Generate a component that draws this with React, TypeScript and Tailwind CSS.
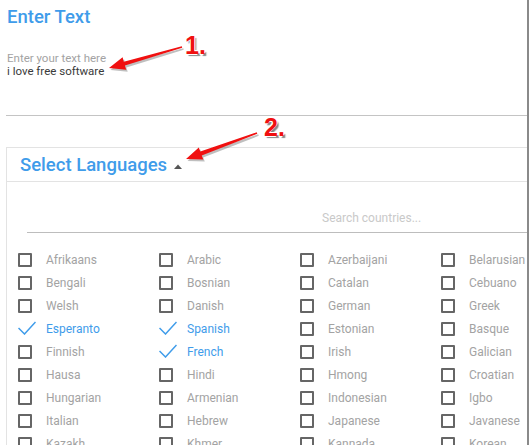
import { useState } from "react";

type Lang = { name: string; checked?: boolean };

const languages: Lang[] = [
  { name: "Afrikaans" }, { name: "Arabic" }, { name: "Azerbaijani" }, { name: "Belarusian" },
  { name: "Bengali" }, { name: "Bosnian" }, { name: "Catalan" }, { name: "Cebuano" },
  { name: "Welsh" }, { name: "Danish" }, { name: "German" }, { name: "Greek" },
  { name: "Esperanto", checked: true }, { name: "Spanish", checked: true }, { name: "Estonian" }, { name: "Basque" },
  { name: "Finnish" }, { name: "French", checked: true }, { name: "Irish" }, { name: "Galician" },
  { name: "Hausa" }, { name: "Hindi" }, { name: "Hmong" }, { name: "Croatian" },
  { name: "Hungarian" }, { name: "Armenian" }, { name: "Indonesian" }, { name: "Igbo" },
  { name: "Italian" }, { name: "Hebrew" }, { name: "Japanese" }, { name: "Javanese" },
  { name: "Kazakh" }, { name: "Khmer" }, { name: "Kannada" }, { name: "Korean" },
];

function CheckRow({ lang }: { lang: Lang }) {
  const [on, setOn] = useState(!!lang.checked);
  return (
    <label className="flex h-[23px] cursor-pointer items-center" onClick={() => setOn(!on)}>
      {on ? (
        <svg width="18" height="14" viewBox="0 0 18 14" className="-mt-[1px] mr-[10px] ml-0">
          <path d="M0.5 7 L6.5 13 L17.5 1" fill="none" stroke="#3f9cea" strokeWidth="1.5" />
        </svg>
      ) : (
        <span className="mr-[14px] block h-[14px] w-[14px] rounded-[1px] border-2 border-[#666]" />
      )}
      <span className={on ? "text-[12px] text-[#3f9cea]" : "text-[12px] text-[#a3a3a3]"}>{lang.name}</span>
    </label>
  );
}

// red annotation arrow, tapered shaft with a solid head
function Arrow({ tail, tip }: { tail: [number, number]; tip: [number, number] }) {
  const dx = tail[0] - tip[0];
  const dy = tail[1] - tip[1];
  const len = Math.hypot(dx, dy);
  const ux = dx / len;
  const uy = dy / len;
  const nx = -uy;
  const ny = ux;
  const bx = tip[0] + ux * 16;
  const by = tip[1] + uy * 16;
  const p = (x: number, y: number) => `${x.toFixed(1)},${y.toFixed(1)}`;
  const pts = [
    p(tip[0], tip[1]),
    p(bx + nx * 6.5, by + ny * 6.5),
    p(bx + nx * 2, by + ny * 2),
    p(tail[0] + nx * 0.8, tail[1] + ny * 0.8),
    p(tail[0] - nx * 0.8, tail[1] - ny * 0.8),
    p(bx - nx * 2, by - ny * 2),
    p(bx - nx * 6.5, by - ny * 6.5),
  ].join(" ");
  return (
    <>
      <polygon points={pts} fill="#000" opacity="0.25" transform="translate(1.5,2)" />
      <polygon points={pts} fill="#f01010" />
    </>
  );
}

export default function App() {
  return (
    <div className="relative h-[445px] w-[529px] overflow-hidden border-r-2 border-[#8a8a8a] bg-white font-['Roboto',sans-serif]">
      <section className="pl-[7px] pt-[5px]">
        <h2 className="text-[18.5px] leading-6 font-medium text-[#3f9cea]">Enter Text</h2>
        <div className="mt-[23px] text-[11.5px] leading-[13px]">
          <div className="text-[#a3a3a3]">Enter your text here</div>
          <div className="text-[#3a3a3a]">i love free software</div>
        </div>
      </section>

      <div className="mt-[37px] ml-[6px] border-b border-[#c4c4c4]" />

      <div className="mt-[31px] ml-[6px] border-t border-l border-[#e3e3e3]">
        <div className="flex h-[34px] items-center border-b border-[#e3e3e3] pl-[13px]">
          <span className="pt-[3px] text-[18.5px] font-medium text-[#3f9cea]">Select Languages</span>
          <svg width="8" height="5" viewBox="0 0 8 5" className="ml-[7px] mt-[4px]">
            <path d="M0 5 L4 0.5 L8 5 Z" fill="#555" />
          </svg>
        </div>
        <div className="pt-[22px] pl-[20px]">
          <input
            placeholder="Search countries..."
            className="h-[29px] w-[700px] border-b border-[#bdbdbd] pl-[295px] text-[12px] outline-none placeholder:text-[#c9c9c9]"
          />
        </div>
        <div className="mt-[15px] grid grid-cols-[141px_141px_141px_141px] pl-[11px]">
          {languages.map((l) => (
            <CheckRow key={l.name} lang={l} />
          ))}
        </div>
      </div>

      <svg className="pointer-events-none absolute top-0 left-0" width="529" height="445">
        <Arrow tail={[182, 47]} tip={[109, 68]} />
        <Arrow tail={[257, 133]} tip={[186, 159]} />
      </svg>
      <span className="pointer-events-none absolute top-[27px] left-[185px] font-['Liberation_Sans',sans-serif] text-[25px] font-bold text-[#f01010] [text-shadow:-1px_-1px_0_#fff,1px_-1px_0_#fff,-1px_1px_0_#fff,2px_2px_1px_#888]">
        1.
      </span>
      <span className="pointer-events-none absolute top-[109px] left-[264px] font-['Liberation_Sans',sans-serif] text-[25px] font-bold text-[#f01010] [text-shadow:-1px_-1px_0_#fff,1px_-1px_0_#fff,-1px_1px_0_#fff,2px_2px_1px_#888]">
        2.
      </span>
    </div>
  );
}
